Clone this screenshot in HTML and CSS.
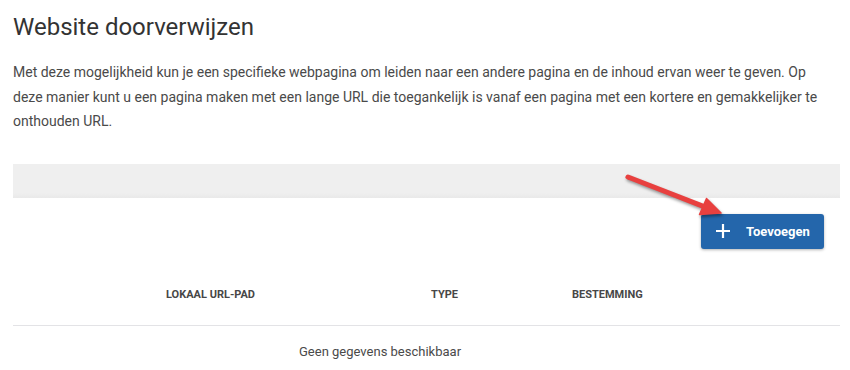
FILE: index.html
```html
<!DOCTYPE html>
<html lang="nl">
<head>
<meta charset="utf-8">
<title>Website doorverwijzen</title>
<link rel="stylesheet" href="styles.css">
</head>
<body>
<div class="page">
  <h1 class="title">Website doorverwijzen</h1>
  <p class="intro">Met deze mogelijkheid kun je een specifieke webpagina om leiden naar een andere pagina en de inhoud ervan weer te geven. Op deze manier kunt u een pagina maken met een lange URL die toegankelijk is vanaf een pagina met een kortere en gemakkelijker te onthouden URL.</p>
  <div class="bar"></div>
  <div class="toolbar">
    <button class="add-btn" type="button">
      <svg class="plus" width="16" height="16" viewBox="0 0 16 16"><path d="M8 1v14M1 8h14" stroke="#fff" stroke-width="2.2" fill="none"/></svg>
      <span>Toevoegen</span>
    </button>
  </div>
  <div class="table">
    <div class="thead">
      <div class="th c1"></div>
      <div class="th c2">LOKAAL URL-PAD</div>
      <div class="th c3">TYPE</div>
      <div class="th c4">BESTEMMING</div>
    </div>
    <div class="empty">Geen gegevens beschikbaar</div>
  </div>
  <svg class="arrow" width="140" height="70" viewBox="0 0 140 70">
    <line x1="28" y1="17" x2="104" y2="46.6" stroke="#e8403f" stroke-width="5" stroke-linecap="round"/>
    <polygon points="121,53 99.5,54.5 106.5,38.5" fill="#e8403f" stroke="#e8403f" stroke-width="1.5" stroke-linejoin="round"/>
  </svg>
</div>
</body>
</html>
```
FILE: styles.css
```css
html, body {
  margin: 0;
  padding: 0;
  background: #fff;
}
body {
  font-family: Roboto, "Liberation Sans", sans-serif;
  color: #444;
}
.page {
  position: relative;
  padding: 0 10px 0 13px;
}
.title {
  margin: 0;
  padding-top: 13px;
  font-size: 24px;
  font-weight: 400;
  line-height: 28px;
  color: #333;
}
.intro {
  margin: 19px 0 0;
  padding-right: 16px;
  font-size: 14px;
  line-height: 24.5px;
  color: #4a4a4a;
}
.bar {
  margin-top: 30px;
  height: 34px;
  background: linear-gradient(#efefef 0, #efefef 85%, #e9e9e9 100%);
}
.toolbar {
  display: flex;
  justify-content: flex-end;
  padding: 16px 16px 16px 0;
}
.add-btn {
  display: flex;
  align-items: center;
  gap: 15px;
  height: 35px;
  width: 123px;
  padding: 0 0 0 14px;
  border: none;
  border-radius: 3px;
  background: #2466ab;
  color: #fff;
  font-family: Roboto, "Liberation Sans", sans-serif;
  font-size: 13px;
  font-weight: 700;
  box-shadow: 0 1px 3px rgba(0,0,0,0.3);
}
.plus {
  display: block;
}
.thead {
  display: grid;
  grid-template-columns: 137px 265px 141px 1fr;
  height: 60px;
  align-items: center;
  border-bottom: 1px solid #e3e3e6;
}
.th {
  padding-left: 16px;
  font-size: 11px;
  font-weight: 700;
  color: #474747;
}
.empty {
  height: 51px;
  display: flex;
  align-items: center;
  padding-left: 286px;
  font-size: 13px;
  color: #4a4a4a;
}
.arrow {
  position: absolute;
  left: 600px;
  top: 160px;
  filter: drop-shadow(1px 2px 1.5px rgba(0,0,0,0.4));
}
```
